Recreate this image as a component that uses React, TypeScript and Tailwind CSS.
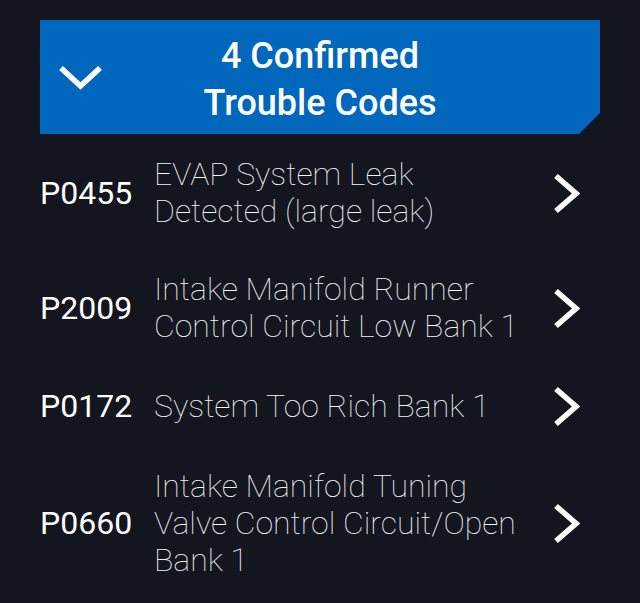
import React from "react";

const codes = [
  { code: "P0455", desc: "EVAP System Leak Detected (large leak)" },
  { code: "P2009", desc: "Intake Manifold Runner Control Circuit Low Bank 1" },
  { code: "P0172", desc: "System Too Rich Bank 1" },
  { code: "P0660", desc: "Intake Manifold Tuning Valve Control Circuit/Open Bank 1" },
];

function ChevronRight() {
  return (
    <svg width="27" height="41" viewBox="0 0 27 41" className="shrink-0">
      <polyline points="3,3 23,20.5 3,38" fill="none" stroke="#ffffff" strokeWidth="5.5" strokeLinejoin="miter" />
    </svg>
  );
}

function ChevronDown() {
  return (
    <svg width="43" height="25" viewBox="0 0 43 25">
      <polyline points="2,2 21.5,20 41,2" fill="none" stroke="#ffffff" strokeWidth="5.5" strokeLinejoin="miter" />
    </svg>
  );
}

export default function App() {
  return (
    <div className="w-[640px] h-[603px] bg-[#13151f] [font-family:Roboto,sans-serif] overflow-hidden">
      <div className="px-10 pt-5">
        <div className="h-[114px] bg-[#0067bc] grid grid-cols-[1fr_auto_1fr] items-center [clip-path:polygon(0_0,100%_0,100%_calc(100%_-_21px),calc(100%_-_21px)_100%,0_100%)]">
          <div className="pl-[19px] pt-[2px] flex items-center">
            <ChevronDown />
          </div>
          <div className="text-white font-medium text-[36px] leading-[47px] text-center pt-[5px]">
            4 Confirmed
            <br />
            Trouble Codes
          </div>
          <div />
        </div>
        <div className="pt-[1.5px]">
          {codes.map((c) => (
            <div key={c.code} className="flex items-center py-[20.5px]">
              <div className="w-[114px] shrink-0 text-white text-[32px] leading-[37px]">{c.code}</div>
              <div className="w-[372px] shrink-0 text-[#f4f4f6] font-thin text-[32px] leading-[37px]">{c.desc}</div>
              <div className="ml-[27px] flex items-center">
                <ChevronRight />
              </div>
            </div>
          ))}
        </div>
      </div>
    </div>
  );
}
